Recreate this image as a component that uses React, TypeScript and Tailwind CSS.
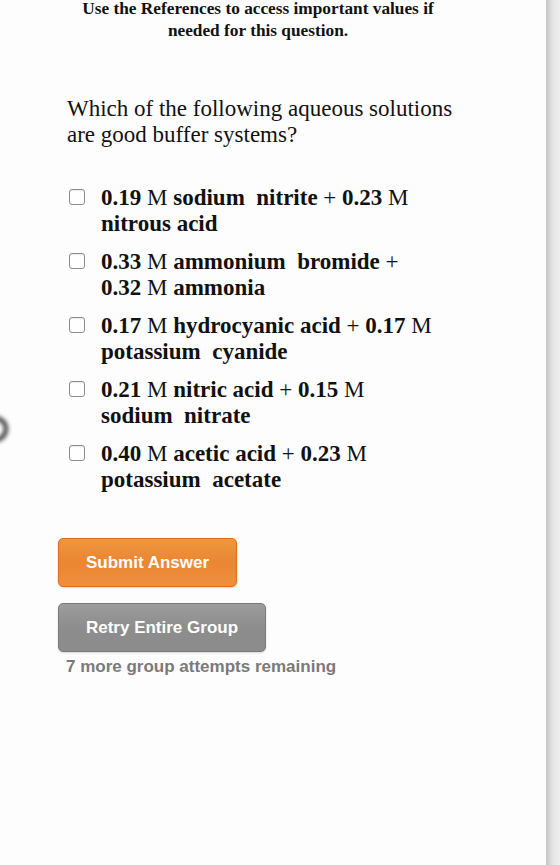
type Part = [string, boolean]

const options: Part[][][] = [
  [
    [['0.19', true], [' M ', false], ['sodium\u00a0 nitrite', true], [' + ', false], ['0.23', true], [' M', false]],
    [['nitrous acid', true]],
  ],
  [
    [['0.33', true], [' M ', false], ['ammonium\u00a0 bromide', true], [' +', false]],
    [['0.32', true], [' M ', false], ['ammonia', true]],
  ],
  [
    [['0.17', true], [' M ', false], ['hydrocyanic acid', true], [' + ', false], ['0.17', true], [' M', false]],
    [['potassium\u00a0 cyanide', true]],
  ],
  [
    [['0.21', true], [' M ', false], ['nitric acid', true], [' + ', false], ['0.15', true], [' M', false]],
    [['sodium\u00a0 nitrate', true]],
  ],
  [
    [['0.40', true], [' M ', false], ['acetic acid', true], [' + ', false], ['0.23', true], [' M', false]],
    [['potassium\u00a0 acetate', true]],
  ],
]

export default function App() {
  return (
    <div className="relative flex h-[865px] w-[560px] overflow-hidden bg-white">
      <div className="flex-1 bg-[#fdfdfd]">
        <div className="mt-[-2px] ml-[48px] w-[420px] text-center font-['Liberation_Serif',serif] text-[17.3px] font-bold leading-[22px] text-[#111]">
          <div>Use the References to access important values if</div>
          <div>needed for this question.</div>
        </div>

        <div className="mt-[54px] pl-[67px] font-['Liberation_Serif',serif] text-[23px] leading-[26px] text-[#111]">
          <div>Which of the following aqueous solutions</div>
          <div>are good buffer systems?</div>
        </div>

        <ul className="mt-[37px] pl-[69px] flex flex-col gap-[12px] font-['Liberation_Serif',serif] text-[23px] leading-[26px] text-[#111]">
          {options.map((lines, i) => (
            <li key={i} className="flex items-start gap-[16px]">
              <span className="mt-[4px] h-[16px] w-[16px] shrink-0 rounded-[3px] border border-[#8a8a8a] bg-white shadow-[inset_0_1px_1px_rgba(0,0,0,0.08)]" />
              <div className="whitespace-pre">
                {lines.map((line, k) => (
                  <div key={k}>
                    {line.map(([t, b], j) => (
                      <span key={j} className={b ? 'font-bold' : 'font-normal'}>{t}</span>
                    ))}
                  </div>
                ))}
              </div>
            </li>
          ))}
        </ul>

        <div className="pl-[58px] pt-[45px] flex flex-col items-start font-['Liberation_Sans',Arial,sans-serif] font-bold">
          <button className="h-[49px] w-[179px] rounded-[5px] border border-[#dd6b1f] bg-gradient-to-b from-[#f0963f] via-[#ea8634] to-[#ef8f3d] text-[17px] text-white shadow-[0_1px_2px_rgba(0,0,0,0.15)]">
            Submit Answer
          </button>
          <button className="mt-[16px] h-[49px] w-[208px] rounded-[5px] border border-[#7a7a7a] bg-gradient-to-b from-[#9c9c9c] via-[#8d8d8d] to-[#8c8c8c] text-[17px] text-white shadow-[0_1px_2px_rgba(0,0,0,0.15)]">
            Retry Entire Group
          </button>
          <p className="mt-[5px] pl-[8px] text-[17px] leading-[20px] text-[#7a7a7a]">7 more group attempts remaining</p>
        </div>
      </div>
      <div className="w-[14px] bg-gradient-to-r from-[#c4c4c4] via-[#e6e6e6] to-[#eeeeee]" />
      <div className="absolute left-[-18px] top-[416px] h-[26px] w-[26px] rounded-full border-[4px] border-[#333] blur-[2px]" />
    </div>
  )
}
